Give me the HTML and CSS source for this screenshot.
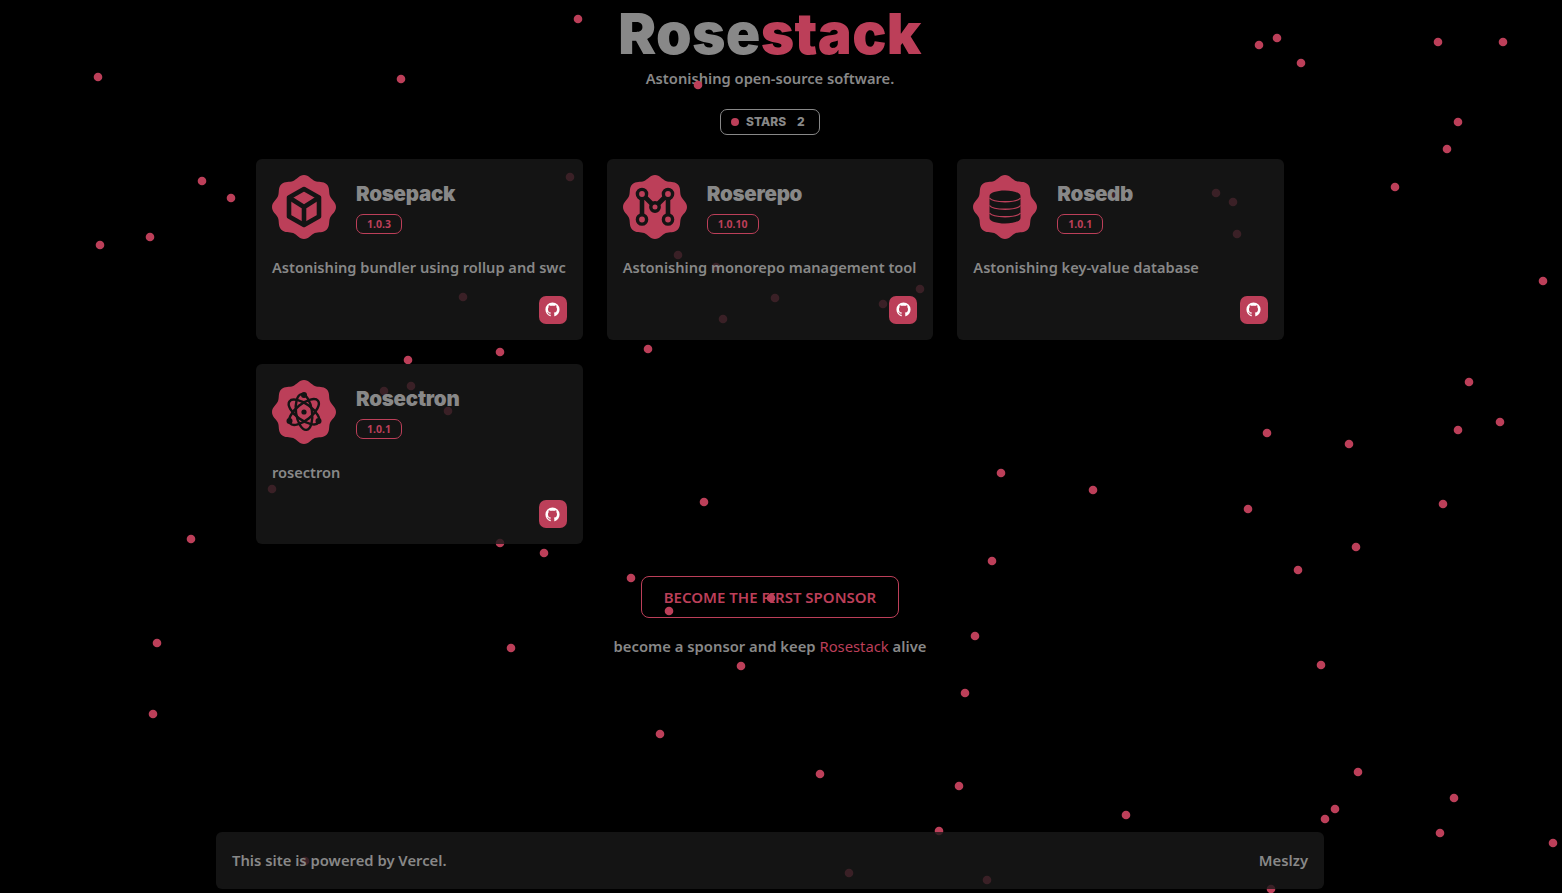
FILE: index.html
```html
<!DOCTYPE html>
<html lang="en">
<head>
<meta charset="utf-8">
<title>Rosestack</title>
<link rel="stylesheet" href="styles.css">
</head>
<body>
<svg class="defs" width="0" height="0" aria-hidden="true">
  <defs>
    <path id="flower" d="M0-32C5-32 7.09-27.58 10.79-26.05C14.49-24.52 19.09-26.17 22.63-22.63C26.17-19.09 24.52-14.49 26.05-10.79C27.58-7.09 32-5 32 0C32 5 27.58 7.09 26.05 10.79C24.52 14.49 26.17 19.09 22.63 22.63C19.09 26.17 14.49 24.52 10.79 26.05C7.09 27.58 5 32 0 32C-5 32-7.09 27.58-10.79 26.05C-14.49 24.52-19.09 26.17-22.63 22.63C-26.17 19.09-24.52 14.49-26.05 10.79C-27.58 7.09-32 5-32 0C-32-5-27.58-7.09-26.05-10.79C-24.52-14.49-26.17-19.09-22.63-22.63C-19.09-26.17-14.49-24.52-10.79-26.05C-7.09-27.58-5-32 0-32Z"/>
    <path id="octo" d="M12,2A10,10 0 0,0 2,12C2,16.42 4.87,20.17 8.84,21.5C9.34,21.58 9.5,21.27 9.5,21C9.5,20.77 9.5,20.14 9.5,19.31C6.73,19.91 6.14,17.97 6.14,17.97C5.68,16.81 5.03,16.5 5.03,16.5C4.12,15.88 5.1,15.9 5.1,15.9C6.1,15.97 6.63,16.93 6.63,16.93C7.5,18.45 8.97,18 9.54,17.76C9.63,17.11 9.89,16.67 10.17,16.42C7.95,16.17 5.62,15.31 5.62,11.5C5.62,10.39 6,9.5 6.65,8.79C6.55,8.54 6.2,7.5 6.75,6.15C6.75,6.15 7.59,5.88 9.5,7.17C10.29,6.95 11.15,6.84 12,6.84C12.85,6.84 13.71,6.95 14.5,7.17C16.41,5.88 17.25,6.15 17.25,6.15C17.8,7.5 17.45,8.54 17.35,8.79C18,9.5 18.38,10.39 18.38,11.5C18.38,15.32 16.04,16.16 13.81,16.41C14.17,16.72 14.5,17.33 14.5,18.26C14.5,19.6 14.5,20.68 14.5,21C14.5,21.27 14.66,21.59 15.17,21.5C19.14,20.16 22,16.42 22,12A10,10 0 0,0 12,2Z"/>
  </defs>
</svg>

<svg class="particles" width="1562" height="893" viewBox="0 0 1562 893" aria-hidden="true">
  <g class="dot">
    <circle cx="578" cy="19" r="4.3"/><circle cx="98" cy="77" r="4.3"/><circle cx="401" cy="79" r="4.3"/><circle cx="698" cy="85" r="4.3"/>
    <circle cx="1259" cy="45" r="4.3"/><circle cx="1277" cy="38" r="4.3"/><circle cx="1301" cy="63" r="4.3"/><circle cx="1438" cy="42" r="4.3"/>
    <circle cx="1503" cy="42" r="4.3"/><circle cx="1458" cy="122" r="4.3"/><circle cx="1447" cy="149" r="4.3"/><circle cx="1395" cy="187" r="4.3"/>
    <circle cx="202" cy="181" r="4.3"/><circle cx="231" cy="198" r="4.3"/><circle cx="100" cy="245" r="4.3"/><circle cx="150" cy="237" r="4.3"/>
    <circle cx="1543" cy="281" r="4.3"/><circle cx="408" cy="360" r="4.3"/><circle cx="500" cy="352" r="4.3"/><circle cx="648" cy="349" r="4.3"/>
    <circle cx="1469" cy="382" r="4.3"/><circle cx="1267" cy="433" r="4.3"/><circle cx="1349" cy="444" r="4.3"/><circle cx="1458" cy="430" r="4.3"/>
    <circle cx="1500" cy="422" r="4.3"/><circle cx="1001" cy="473" r="4.3"/><circle cx="1093" cy="490" r="4.3"/><circle cx="704" cy="502" r="4.3"/>
    <circle cx="1248" cy="509" r="4.3"/><circle cx="1443" cy="504" r="4.3"/><circle cx="191" cy="539" r="4.3"/><circle cx="500" cy="543" r="4.3"/>
    <circle cx="544" cy="553" r="4.3"/><circle cx="992" cy="561" r="4.3"/><circle cx="1298" cy="570" r="4.3"/><circle cx="1356" cy="547" r="4.3"/>
    <circle cx="631" cy="578" r="4.3"/><circle cx="771" cy="598" r="4.3"/><circle cx="669" cy="611" r="4.3"/><circle cx="975" cy="636" r="4.3"/>
    <circle cx="157" cy="643" r="4.3"/><circle cx="511" cy="648" r="4.3"/><circle cx="741" cy="666" r="4.3"/><circle cx="1321" cy="665" r="4.3"/>
    <circle cx="965" cy="693" r="4.3"/><circle cx="153" cy="714" r="4.3"/><circle cx="660" cy="734" r="4.3"/><circle cx="820" cy="774" r="4.3"/>
    <circle cx="959" cy="786" r="4.3"/><circle cx="1358" cy="772" r="4.3"/><circle cx="1454" cy="798" r="4.3"/><circle cx="1335" cy="809" r="4.3"/>
    <circle cx="1325" cy="819" r="4.3"/><circle cx="1126" cy="815" r="4.3"/><circle cx="1440" cy="833" r="4.3"/><circle cx="1553" cy="843" r="4.3"/>
    <circle cx="939" cy="831" r="4.3"/><circle cx="1271" cy="889" r="4.3"/>
    <circle cx="570" cy="177" r="4.3"/><circle cx="463" cy="297" r="4.3"/><circle cx="678" cy="255" r="4.3"/><circle cx="716" cy="267" r="4.3"/>
    <circle cx="775" cy="298" r="4.3"/><circle cx="723" cy="319" r="4.3"/><circle cx="883" cy="304" r="4.3"/><circle cx="920" cy="289" r="4.3"/>
    <circle cx="1216" cy="193" r="4.3"/><circle cx="1233" cy="202" r="4.3"/><circle cx="1237" cy="234" r="4.3"/><circle cx="1112" cy="196" r="4.3"/>
    <circle cx="384" cy="391" r="4.3"/><circle cx="411" cy="386" r="4.3"/><circle cx="448" cy="411" r="4.3"/><circle cx="272" cy="489" r="4.3"/>
    <circle cx="849" cy="873" r="4.3"/><circle cx="987" cy="880" r="4.3"/><circle cx="305" cy="861" r="4.3"/>
  </g>
</svg>

<div class="page">
  <header class="hero">
    <h1 class="logo">Rose<span class="rose">stack</span></h1>
    <p class="tagline">Astonishing open-source software.</p>
    <div class="stars"><span class="stars-dot"></span><span class="stars-label">STARS</span><span class="stars-count">2</span></div>
  </header>

  <main class="grid">
    <article class="card">
      <div class="card-head">
        <svg class="badge-icon" viewBox="-32 -32 64 64"><use href="#flower" class="flower"/>
          <g class="glyph-line"><path d="M0-18L15-9.5V9.5L0 18L-15 9.5V-9.5Z"/><path d="M-15-9.5L0 0L15-9.5M0 0V18"/></g>
        </svg>
        <div class="card-title"><h2 class="name">Rosepack</h2><span class="version">1.0.3</span></div>
      </div>
      <p class="desc">Astonishing bundler using rollup and swc</p>
      <a class="gh" href="#"><svg class="gh-icon" viewBox="0 0 24 24"><use href="#octo"/></svg></a>
    </article>

    <article class="card">
      <div class="card-head">
        <svg class="badge-icon" viewBox="-32 -32 64 64"><use href="#flower" class="flower"/>
          <g class="glyph-line"><path d="M-13-13V12M13-13V12M-13-13L0 0L13-13"/>
            <circle class="node" cx="-13" cy="-13" r="4.6"/><circle class="node" cx="13" cy="-13" r="4.6"/><circle class="node" cx="0" cy="0" r="4.2"/><circle class="node" cx="-13" cy="12.5" r="4.6"/><circle class="node" cx="13" cy="12.5" r="4.6"/></g>
        </svg>
        <div class="card-title"><h2 class="name">Roserepo</h2><span class="version">1.0.10</span></div>
      </div>
      <p class="desc">Astonishing monorepo management tool</p>
      <a class="gh" href="#"><svg class="gh-icon" viewBox="0 0 24 24"><use href="#octo"/></svg></a>
    </article>

    <article class="card">
      <div class="card-head">
        <svg class="badge-icon" viewBox="-32 -32 64 64"><use href="#flower" class="flower"/>
          <path class="glyph-fill" d="M-15.5-11C-15.5-14.2-8.5-16.5 0-16.5S15.5-14.2 15.5-11V11C15.5 14.2 8.5 16.5 0 16.5S-15.5 14.2-15.5 11Z"/>
          <path class="db-line" d="M-15.5-9C-12-4 12-4 15.5-9M-15.5-1.5C-12 3.5 12 3.5 15.5-1.5M-15.5 6C-12 11 12 11 15.5 6"/>
        </svg>
        <div class="card-title"><h2 class="name">Rosedb</h2><span class="version">1.0.1</span></div>
      </div>
      <p class="desc">Astonishing key-value database</p>
      <a class="gh" href="#"><svg class="gh-icon" viewBox="0 0 24 24"><use href="#octo"/></svg></a>
    </article>

    <article class="card">
      <div class="card-head">
        <svg class="badge-icon" viewBox="-32 -32 64 64"><use href="#flower" class="flower"/>
          <g class="atom"><ellipse rx="18" ry="8" transform="rotate(36)"/><ellipse rx="18" ry="8" transform="rotate(82)"/><ellipse rx="18" ry="8" transform="rotate(141)"/></g>
          <circle class="glyph-fill" r="2.6"/><circle class="glyph-fill" cx="0" cy="-17" r="3"/><circle class="glyph-fill" cx="-14.5" cy="9" r="3"/><circle class="glyph-fill" cx="14.5" cy="9" r="3"/>
        </svg>
        <div class="card-title"><h2 class="name">Rosectron</h2><span class="version">1.0.1</span></div>
      </div>
      <p class="desc">rosectron</p>
      <a class="gh" href="#"><svg class="gh-icon" viewBox="0 0 24 24"><use href="#octo"/></svg></a>
    </article>
  </main>

  <section class="sponsor">
    <a class="sponsor-btn" href="#">BECOME THE FIRST SPONSOR</a>
    <p class="sponsor-note">become a sponsor and keep <span class="rose-light">Rosestack</span> alive</p>
  </section>

  <footer class="footer">
    <span>This site is powered by Vercel.</span>
    <span>Meslzy</span>
  </footer>
</div>
</body>
</html>
```
FILE: styles.css
```css
* { box-sizing: border-box; }

html, body {
  margin: 0;
  height: 893px;
  overflow: hidden;
  background: #000;
}

body {
  position: relative;
  font-family: "Noto Sans", "Liberation Sans", sans-serif;
  color: #888;
}

.defs { position: absolute; }

.particles {
  position: absolute;
  top: 0;
  left: 0;
  z-index: 1;
}

.dot { fill: #bc3f59; }

.page {
  width: 1540px;
  height: 893px;
  display: flex;
  flex-direction: column;
  align-items: center;
}

.hero {
  display: flex;
  flex-direction: column;
  align-items: center;
}

.logo {
  margin: 0;
  height: 68px;
  font-family: Inter, sans-serif;
  font-weight: 900;
  font-size: 57px;
  line-height: 68px;
  letter-spacing: 0.3px;
  color: #888;
}

.rose { color: #bc3f59; }

.tagline {
  margin: 0;
  height: 22px;
  font-size: 14.7px;
  line-height: 20px;
  font-weight: 600;
}

.stars {
  margin-top: 19px;
  width: 100px;
  height: 26px;
  border: 1px solid #888;
  border-radius: 7px;
  display: flex;
  align-items: center;
  padding-left: 10px;
  font-family: Inter, sans-serif;
  font-size: 12px;
  font-weight: 800;
  line-height: 22px;
}

.stars-dot {
  width: 8px;
  height: 8px;
  border-radius: 50%;
  background: #bc3f59;
  margin-right: 7px;
}

.stars-count { margin-left: 11px; }

.grid {
  margin-top: 24px;
  width: 1028px;
  display: grid;
  grid-template-columns: repeat(3, minmax(0, 1fr));
  gap: 24px;
}

.card {
  position: relative;
  z-index: 2;
  display: flex;
  flex-direction: column;
  padding: 16px;
  border-radius: 6px;
  background: rgba(25, 25, 25, .8);
}

.card-head {
  display: flex;
  gap: 20px;
}

.badge-icon {
  width: 64px;
  height: 64px;
  flex: none;
}

.flower { fill: #bc3f59; }

.glyph-line {
  fill: none;
  stroke: #141414;
  stroke-width: 4.6;
  stroke-linejoin: round;
}

.node {
  fill: #bc3f59;
  stroke-width: 3.4;
}

.glyph-fill { fill: #141414; }

.db-line {
  fill: none;
  stroke: #bc3f59;
  stroke-width: 1.3;
}

.atom {
  fill: none;
  stroke: #141414;
  stroke-width: 2.4;
}

.card-title {
  display: flex;
  flex-direction: column;
  align-items: flex-start;
  padding-top: 4px;
}

.name {
  margin: 0;
  height: 30px;
  font-family: Inter, sans-serif;
  font-weight: 900;
  font-size: 20.5px;
  line-height: 30px;
  letter-spacing: -0.25px;
  color: #888;
}

.version {
  margin-top: 5px;
  height: 20px;
  padding: 0 10px;
  border: 1px solid #bc3f59;
  border-radius: 7px;
  font-size: 10.5px;
  font-weight: 700;
  line-height: 18px;
  color: #bc3f59;
}

.desc {
  margin: 16px 0 0;
  font-size: 14.6px;
  line-height: 24px;
  font-weight: 600;
  white-space: nowrap;
}

.gh {
  align-self: flex-end;
  margin-top: 16.5px;
  width: 28px;
  height: 28px;
  border-radius: 7px;
  background: #bc3f59;
  display: flex;
  align-items: center;
  justify-content: center;
}

.gh-icon {
  width: 17px;
  height: 17px;
  fill: #fff;
}

.sponsor {
  margin-top: 32px;
  display: flex;
  flex-direction: column;
  align-items: center;
}

.sponsor-btn {
  width: 258px;
  height: 42px;
  border: 1px solid #bc3f59;
  border-radius: 8px;
  display: flex;
  align-items: center;
  justify-content: center;
  font-size: 15px;
  font-weight: 600;
  color: #bc3f59;
  text-decoration: none;
}

.sponsor-note {
  margin: 16px 0 0;
  font-size: 14.8px;
  line-height: 24px;
  font-weight: 600;
}

.rose-light { color: #bc3f59; font-weight: 400; }

.footer {
  position: relative;
  z-index: 2;
  margin-top: auto;
  margin-bottom: 4px;
  width: 1108px;
  height: 57px;
  padding: 0 16px 2px;
  border-radius: 6px;
  background: rgba(25, 25, 25, .8);
  display: flex;
  align-items: center;
  justify-content: space-between;
  font-size: 14.8px;
  font-weight: 600;
}
```
